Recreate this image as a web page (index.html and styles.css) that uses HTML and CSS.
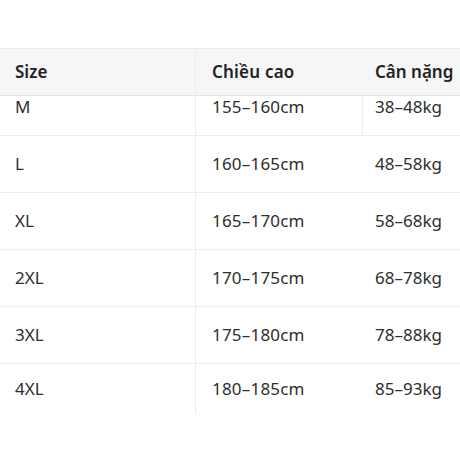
FILE: index.html
```html
<!DOCTYPE html>
<html lang="vi">
<head>
<meta charset="utf-8">
<link rel="stylesheet" href="styles.css">
</head>
<body>
<div class="page">
  <div class="table">
    <div class="row head">
      <div class="cell c1">Size</div>
      <div class="cell c2">Chiều cao</div>
      <div class="cell c3">Cân nặng</div>
    </div>
    <div class="row first">
      <div class="cell c1">M</div>
      <div class="cell c2">155–160cm</div>
      <div class="cell c3 split">38–48kg</div>
    </div>
    <div class="row">
      <div class="cell c1">L</div>
      <div class="cell c2">160–165cm</div>
      <div class="cell c3">48–58kg</div>
    </div>
    <div class="row">
      <div class="cell c1">XL</div>
      <div class="cell c2">165–170cm</div>
      <div class="cell c3">58–68kg</div>
    </div>
    <div class="row">
      <div class="cell c1">2XL</div>
      <div class="cell c2">170–175cm</div>
      <div class="cell c3">68–78kg</div>
    </div>
    <div class="row">
      <div class="cell c1">3XL</div>
      <div class="cell c2">175–180cm</div>
      <div class="cell c3">78–88kg</div>
    </div>
    <div class="row last">
      <div class="cell c1">4XL</div>
      <div class="cell c2">180–185cm</div>
      <div class="cell c3">85–93kg</div>
    </div>
  </div>
</div>
</body>
</html>
```
FILE: styles.css
```css
html, body {
  margin: 0;
  padding: 0;
  background: #ffffff;
}
.page {
  width: 460px;
  height: 460px;
  padding-top: 48px;
  box-sizing: border-box;
  font-family: "Noto Sans", "Open Sans", sans-serif;
  font-size: 17px;
  color: #2e2e2e;
}
.table {
  display: flex;
  flex-direction: column;
}
.row {
  display: grid;
  grid-template-columns: 196px 166px 98px;
  height: 57px;
  border-bottom: 1px solid #ececec;
  box-sizing: border-box;
}
.row.head {
  height: 48px;
  background: #f6f6f6;
  border-top: 1px solid #e8e8e8;
  border-bottom: 1px solid #e4e4e4;
  font-weight: 600;
  color: #222222;
}
.row.first {
  height: 40px;
}
.row.first .cell {
  align-items: flex-start;
  padding-top: 0;
}
.row.last {
  height: 50px;
  border-bottom: none;
}
.cell {
  display: flex;
  align-items: center;
  line-height: 22px;
  white-space: nowrap;
}
.c1 {
  padding-left: 15px;
  border-right: 1px solid #ebebeb;
}
.c2 {
  padding-left: 16px;
  letter-spacing: 0.2px;
}
.c3 {
  padding-left: 13px;
}
.c3.split {
  border-left: 1px solid #e4eef6;
  padding-left: 12px;
}
```
